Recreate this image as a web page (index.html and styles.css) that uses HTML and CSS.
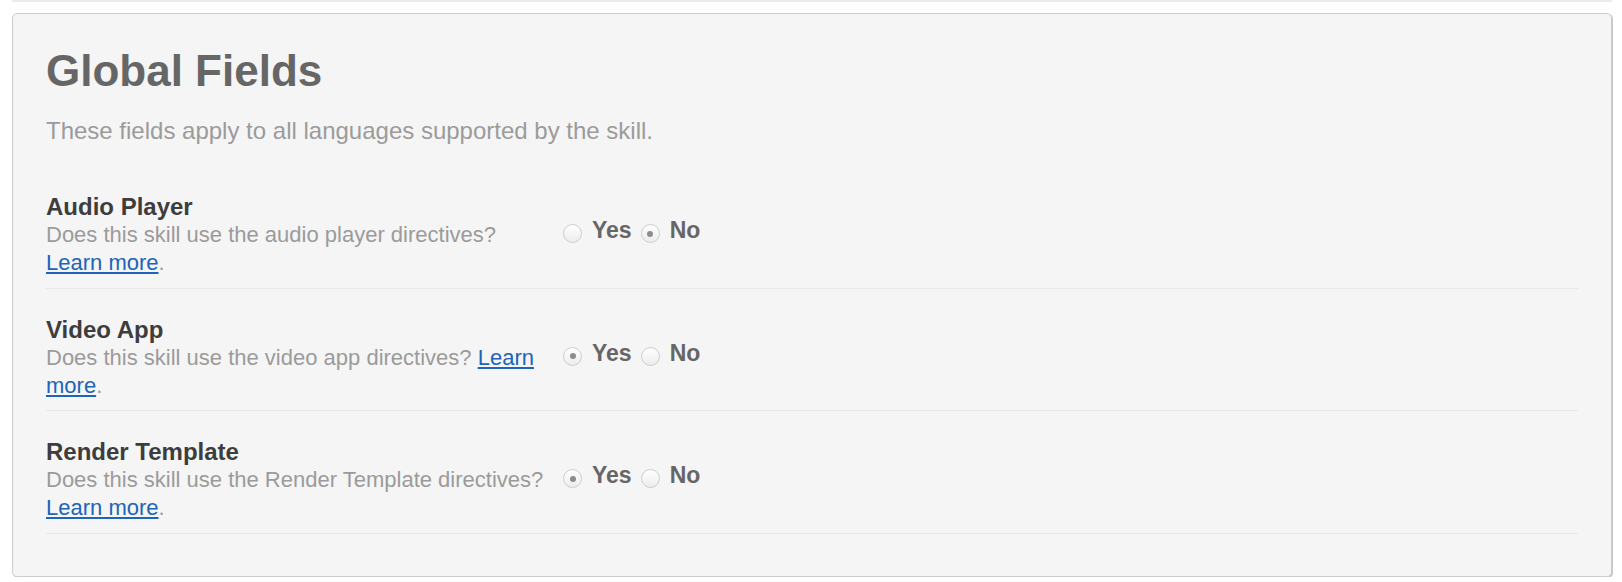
FILE: index.html
```html
<!DOCTYPE html>
<html>
<head>
<meta charset="utf-8">
<link rel="stylesheet" href="styles.css">
</head>
<body>
<div class="topbar"></div>
<section class="panel">
  <h1 class="title">Global Fields</h1>
  <p class="subtitle">These fields apply to all languages supported by the skill.</p>

  <div class="row">
    <div class="info">
      <div class="label">Audio Player</div>
      <div class="desc">Does this skill use the audio player directives? <a href="#">Learn more</a>.</div>
    </div>
    <div class="choices">
      <span class="radio"></span><span class="opt">Yes</span>
      <span class="radio checked"></span><span class="opt">No</span>
    </div>
  </div>

  <div class="row">
    <div class="info">
      <div class="label">Video App</div>
      <div class="desc">Does this skill use the video app directives? <a href="#">Learn more</a>.</div>
    </div>
    <div class="choices">
      <span class="radio checked"></span><span class="opt">Yes</span>
      <span class="radio"></span><span class="opt">No</span>
    </div>
  </div>

  <div class="row">
    <div class="info">
      <div class="label">Render Template</div>
      <div class="desc">Does this skill use the Render Template directives? <a href="#">Learn more</a>.</div>
    </div>
    <div class="choices">
      <span class="radio checked"></span><span class="opt">Yes</span>
      <span class="radio"></span><span class="opt">No</span>
    </div>
  </div>
</section>
</body>
</html>
```
FILE: styles.css
```css
html, body {
  margin: 0;
  padding: 0;
  background: #ffffff;
}
body {
  font-family: "Liberation Sans", Arial, Helvetica, sans-serif;
}
.topbar {
  height: 2px;
  margin: 0 10px 0 12px;
  background: #ebebeb;
}
.panel {
  margin: 11px 10px 0 12px;
  border: 1px solid #cccccc;
  border-radius: 5px;
  box-shadow: 1px 1px 0 #c6c6c6;
  background: #f5f5f5;
  padding: 32px 33px 42px 33px;
}
.title {
  margin: 0;
  font-size: 44px;
  line-height: 50px;
  font-weight: bold;
  color: #666666;
}
.subtitle {
  margin: 21px 0 0 0;
  font-size: 24px;
  line-height: 28px;
  color: #9b9b9b;
}
.row {
  display: flex;
  align-items: flex-start;
  padding: 27px 0 10.5px 0;
  border-bottom: 1px solid #e8e8e8;
}
.subtitle + .row {
  margin-top: 48px;
  padding-top: 0;
}
.info {
  width: 500px;
  flex: none;
}
.label {
  font-size: 24px;
  line-height: 28px;
  font-weight: bold;
  color: #3d3d3d;
}
.desc {
  font-size: 22px;
  line-height: 28px;
  color: #9b9b9b;
}
.desc a {
  color: #2163b9;
  text-decoration: underline;
}
.choices {
  display: flex;
  align-items: flex-start;
  margin-top: 23px;
  margin-left: 17px;
  font-size: 23px;
  line-height: 28px;
  font-weight: bold;
  color: #666666;
}
.radio {
  box-sizing: border-box;
  width: 19px;
  height: 19px;
  margin-top: 8px;
  border: 1px solid #cdcdcd;
  border-radius: 50%;
  background: linear-gradient(#ffffff, #ececec);
  display: flex;
  align-items: center;
  justify-content: center;
}
.radio.checked::after {
  content: "";
  width: 6px;
  height: 6px;
  border-radius: 50%;
  background: #8c8c8c;
}
.opt {
  margin-left: 10px;
  margin-right: 9px;
}
```
